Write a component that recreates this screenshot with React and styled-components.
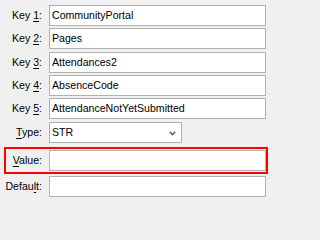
import React from 'react'
import styled, { createGlobalStyle } from 'styled-components'

const GlobalStyle = createGlobalStyle`
  html, body {
    margin: 0;
    padding: 0;
    background: #f0f0f0;
  }
  body {
    font-family: 'Liberation Sans', Arial, sans-serif;
    font-size: 10.6px;
    color: #000;
  }
`

const keys = [
  { n: '1', value: 'CommunityPortal' },
  { n: '2', value: 'Pages' },
  { n: '3', value: 'Attendances2' },
  { n: '4', value: 'AbsenceCode' },
  { n: '5', value: 'AttendanceNotYetSubmitted' },
]

const App = () => {
  return (
    <>
      <GlobalStyle />
      <Form>
        <KeyList>
          {keys.map((k) => (
            <Row key={k.n}>
              <Label>
                Key <u>{k.n}</u>:
              </Label>
              <Field>{k.value}</Field>
            </Row>
          ))}
        </KeyList>
        <Row $top={3}>
          <Label>
            <u>T</u>ype:
          </Label>
          <Select>
            <span>STR</span>
            <svg width="7" height="5" viewBox="0 0 7 5">
              <path d="M0.8 0.8 L3.5 3.6 L6.2 0.8" fill="none" stroke="#5f5f5f" strokeWidth="1.6" />
            </svg>
          </Select>
        </Row>
        <Highlight>
          <Row>
            <Label>
              <u>V</u>alue:
            </Label>
            <Field />
          </Row>
        </Highlight>
        <Row $top={2}>
          <Label>
            Defau<u>l</u>t:
          </Label>
          <Field />
        </Row>
      </Form>
    </>
  )
}

export default App

const Form = styled.div`
  width: 271px;
  height: 202px;
  box-sizing: border-box;
  padding: 5px 5px 0 0;
  display: flex;
  flex-direction: column;
`

const KeyList = styled.div`
  display: flex;
  flex-direction: column;
  gap: 2.25px;
`

const Row = styled.div`
  display: grid;
  grid-template-columns: 1fr 217px;
  column-gap: 7px;
  align-items: center;
  margin-top: ${(props) => props.$top || 0}px;
`

const Label = styled.label`
  text-align: right;
  line-height: 21px;
  white-space: nowrap;

  u {
    text-decoration-thickness: 1px;
    text-underline-offset: 2px;
  }
`

const Field = styled.div`
  height: 21px;
  box-sizing: border-box;
  border: 1px solid #b1b1b1;
  background: #fff;
  padding: 0 2px;
  line-height: 19px;
  color: #000;
  white-space: nowrap;
  overflow: hidden;
`

const Select = styled.div`
  width: 133px;
  height: 21px;
  box-sizing: border-box;
  border: 1px solid #b1b1b1;
  background: #fff;
  padding: 0 5px 0 2px;
  display: flex;
  align-items: center;
  justify-content: space-between;
  line-height: 19px;

  svg {
    display: block;
    margin-top: 1px;
  }
`

const Highlight = styled.div`
  margin: 4px -2px 0 4px;
  border: 2px solid #ff0000;
  padding: 1px 0;
`
